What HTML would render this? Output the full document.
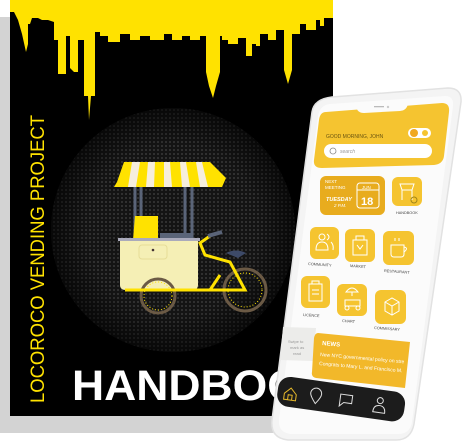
<!DOCTYPE html>
<html><head><meta charset="utf-8"><style>
body{margin:0;width:463px;height:442px;overflow:hidden;background:#fff;font-family:"Liberation Sans",sans-serif}
</style></head><body>
<svg width="463" height="442" viewBox="0 0 463 442" xmlns="http://www.w3.org/2000/svg" style="position:absolute;left:0;top:0">
<defs>
<pattern id="dots" width="4" height="4" patternUnits="userSpaceOnUse"><rect width="4" height="4" fill="#141414"/><circle cx="2" cy="2" r="1" fill="#383838"/></pattern>
<radialGradient id="fade" cx="0.5" cy="0.5" r="0.5"><stop offset="0.7" stop-color="#000" stop-opacity="0"/><stop offset="1" stop-color="#000" stop-opacity="0.6"/></radialGradient>
</defs>
<rect x="0" y="17" width="275" height="416" fill="#d3d3d3"/>
<rect x="10" y="0" width="323" height="416" fill="#000"/>
<path fill="#ffe200" d="M10 0H333V18H324V26H320V20H316V30H306V24H300V34H292V70L288 84L284 70V30H276V40H268V34H260V46H256V44H252V56H246V38H238V44H228V40H222V36H220V72L216 86L213 98L209 86L206 72V36H200V40H190V36H182V40H172V34H164V40H150V36H140V40H130V34H120V42H108V36H100V32H95V96H91L89 120L88 96H84V40H78V72L74 72L70 68V36H66V74H58V40H54V22L48 20H42L38 18H32L30 24H28V44L26 52L22 34L18 20L14 12H10Z"/>
<circle cx="173" cy="230" r="122" fill="url(#dots)"/>
<circle cx="173" cy="230" r="122" fill="url(#fade)"/>
<g>
<line x1="135" y1="185" x2="135" y2="285" stroke="#5a6478" stroke-width="3"/>
<line x1="141" y1="185" x2="141" y2="240" stroke="#5a6478" stroke-width="3"/>
<line x1="185" y1="185" x2="185" y2="285" stroke="#5a6478" stroke-width="3"/>
<line x1="192" y1="185" x2="192" y2="240" stroke="#5a6478" stroke-width="3"/>
<path d="M117 182L124 162H210L226 178L222 187H114Z" fill="#ffe200"/>
<path d="M132 162L128 187H136L140 162ZM148 162L146 187H154L155 162ZM164 162V187H172L170 162ZM180 162L182 187H190L186 162ZM196 162L200 187H208L202 162Z" fill="#f6eedd"/>
<path d="M135 216H158V240H133Z" fill="#ffe200"/>
<rect x="160" y="233" width="32" height="7" fill="#5a6478"/>
<rect x="118" y="238" width="82" height="3" fill="#aab"/>
<path d="M120 241H198V285Q198 290 192 290H126Q120 290 120 285Z" fill="#f5efb5"/>
<rect x="139" y="245" width="28" height="14" rx="3" fill="none" stroke="#e6dd98"/>
<circle cx="153" cy="250" r="1.3" fill="#433"/>
<circle cx="158" cy="296" r="17" fill="none" stroke="#6b5a45" stroke-width="3"/>
<circle cx="158" cy="296" r="14" fill="none" stroke="#ffe200" stroke-width="1" stroke-dasharray="1 2"/>
<circle cx="245" cy="290" r="21" fill="none" stroke="#6b5a45" stroke-width="3"/>
<circle cx="245" cy="290" r="17" fill="none" stroke="#ffe200" stroke-width="1" stroke-dasharray="1 2"/>
<path d="M125 290H215L245 290L230 262L205 255L200 243L210 236" fill="none" stroke="#ffe200" stroke-width="3"/>
<path d="M208 236L222 232" stroke="#5a6478" stroke-width="4"/>
<path d="M226 253Q236 248 246 253L238 258Z" fill="#3d4a68"/>
<path d="M210 290L220 275" stroke="#ffe200" stroke-width="3"/>
</g>
<text transform="translate(44,403) rotate(-90)" font-family="Liberation Sans" font-size="19" fill="#ffe200" textLength="288" lengthAdjust="spacingAndGlyphs">LOCOROCO VENDING PROJECT</text>
<text x="72" y="400" font-family="Liberation Sans" font-weight="bold" font-size="43" fill="#fff" textLength="262" lengthAdjust="spacingAndGlyphs">HANDBOOK</text>
<path d="M332 97L448 88Q462 88 461 102L414 424Q411 440 396 440L288 440Q270 438 272 420L312 112Q314 99 332 97Z" fill="#f4f4f4" stroke="#e2e2e2" stroke-width="1.5"/>
<path d="M330 104L445 96Q454 96 453 106L412 422Q410 434 398 434L290 434Q278 432 279 420L318 116Q320 105 330 104Z" fill="#fbfbfb"/>
<path d="M326 112L442 103Q450 103 449 112L444 156Q443 164 434 165L322 168Q313 168 314 160L319 120Q320 112 326 112Z" fill="#f5c430"/>
<path d="M356 106L408 102Q408 110 400 111L364 113Q357 113 356 106Z" fill="#fbfbfb"/>
<rect x="374" y="106" width="10" height="1.3" fill="#bbb"/>
<circle cx="388" cy="107" r="1.2" fill="#ccc"/>
<text x="326" y="138" font-size="5" fill="#6a5510">GOOD MORNING, JOHN</text>
<rect x="408" y="128" width="23" height="10" rx="5" fill="#fff"/>
<circle cx="414" cy="133" r="4" fill="#f0a820"/>
<circle cx="425" cy="133" r="3" fill="#f5c430"/>
<rect x="324" y="144" width="108" height="14" rx="7" fill="#fff"/>
<circle cx="333" cy="151" r="3" fill="none" stroke="#888" stroke-width="0.8"/>
<text x="340" y="153" font-size="5" fill="#999" font-style="italic">search</text>
<rect x="320" y="176" width="65" height="39" rx="6" fill="#e8ac1e"/>
<text x="325" y="183" font-size="4.5" fill="#fff">NEXT</text>
<text x="325" y="189" font-size="4.5" fill="#fff">MEETING</text>
<text x="326" y="201" font-size="5.5" fill="#fff" font-weight="bold" font-style="italic">TUESDAY</text>
<text x="334" y="207" font-size="4.5" fill="#fff" font-style="italic">2 P.M.</text>
<rect x="357" y="183" width="22" height="25" rx="3" fill="none" stroke="#fff" stroke-width="1"/>
<line x1="357" y1="190" x2="379" y2="190" stroke="#fff"/>
<text x="362" y="189" font-size="4.5" fill="#fff">JUN</text>
<text x="361" y="205" font-size="11" fill="#fff" font-weight="bold">18</text>
<g fill="#f5c430">
<rect x="392" y="177" width="30" height="29" rx="6"/>
<rect x="310" y="227" width="29" height="32" rx="6"/>
<rect x="345" y="229" width="30" height="33" rx="6"/>
<rect x="383" y="231" width="31" height="34" rx="6"/>
<rect x="301" y="276" width="29" height="32" rx="6"/>
<rect x="337" y="284" width="30" height="32" rx="6"/>
<rect x="375" y="290" width="31" height="34" rx="6"/>
</g>
<g fill="none" stroke="#fff" stroke-width="1">
<path d="M400 184H414L412 190H402Z M402 190V200 M412 190V200"/><circle cx="414" cy="200" r="3" stroke="#a0851a"/>
<circle cx="322" cy="237" r="3"/><path d="M316 250Q316 242 322 242Q328 242 328 250Z"/><path d="M327 234Q331 237 327 240M331 242Q334 245 333 250"/>
<path d="M353 240H367V255H353Z M356 240V236H364V240 M357 245L360 249L363 245"/>
<path d="M391 245H404V254Q404 257 401 257H394Q391 257 391 254Z M404 247Q409 248 404 252 M395 241V238 M399 241V238"/>
<path d="M309 284H322V301H309Z M312 284V281H319V284 M312 290H319 M312 294H319"/>
<path d="M345 300H360V306H345Z M352 296V292 M346 292Q352 284 358 292Z"/><circle cx="347" cy="308" r="2"/><circle cx="358" cy="308" r="2"/>
<path d="M385 302L392 298L399 302V311L392 315L385 311Z M385 302L392 306L399 302 M392 306V315"/>
</g>
<g font-size="3.8" fill="#444">
<text x="396" y="214">HANDBOOK</text>
<text x="308" y="265" transform="rotate(4 308 265)">COMMUNITY</text>
<text x="350" y="267" transform="rotate(4 350 267)">MARKET</text>
<text x="384" y="272" transform="rotate(4 384 272)">RESTAURANT</text>
<text x="303" y="316" transform="rotate(4 303 316)">LICENCE</text>
<text x="342" y="322" transform="rotate(4 342 322)">CHART</text>
<text x="374" y="329" transform="rotate(4 374 329)">COMMISSARY</text>
</g>
<path d="M283 327L316 328L313 361L280 360Z" fill="#ececea"/>
<text x="288" y="343" font-size="4" fill="#999">Swipe to</text>
<text x="290" y="349" font-size="4" fill="#999">mark as</text>
<text x="293" y="355" font-size="4" fill="#999">read</text>
<path d="M318 333L410 342L405 388L316 378Q311 377 312 372L314 338Q315 333 318 333Z" fill="#f2b82a"/>
<text x="322" y="345" font-size="6" fill="#fff" font-weight="bold" transform="rotate(5 322 345)">NEWS</text>
<text x="320" y="356" font-size="5" fill="#fff" transform="rotate(5 320 356)">New NYC governmental policy on stre</text>
<text x="319" y="365" font-size="5" fill="#fff" transform="rotate(5 319 365)">Congrats to Mary L. and Francisco M.</text>
<g transform="rotate(8 340 400)">
<rect x="277" y="384" width="128" height="30" rx="12" fill="#1c1c1c"/>
<path d="M284 401L290 395L296 401V407H284Z M288 407V402H292V407" fill="none" stroke="#e5b82a" stroke-width="1"/>
<path d="M316 407Q310 400 310 397A5 5 0 0 1 321 397Q321 400 316 407Z" fill="none" stroke="#ddd" stroke-width="1"/>
<path d="M340 394H352V402H344L340 406Z" fill="none" stroke="#ddd" stroke-width="1"/>
<circle cx="380" cy="395" r="3" fill="none" stroke="#ddd" stroke-width="1"/>
<path d="M374 407Q374 400 380 400Q386 400 386 407Z" fill="none" stroke="#ddd" stroke-width="1"/>
</g>
</svg>
</body></html>
